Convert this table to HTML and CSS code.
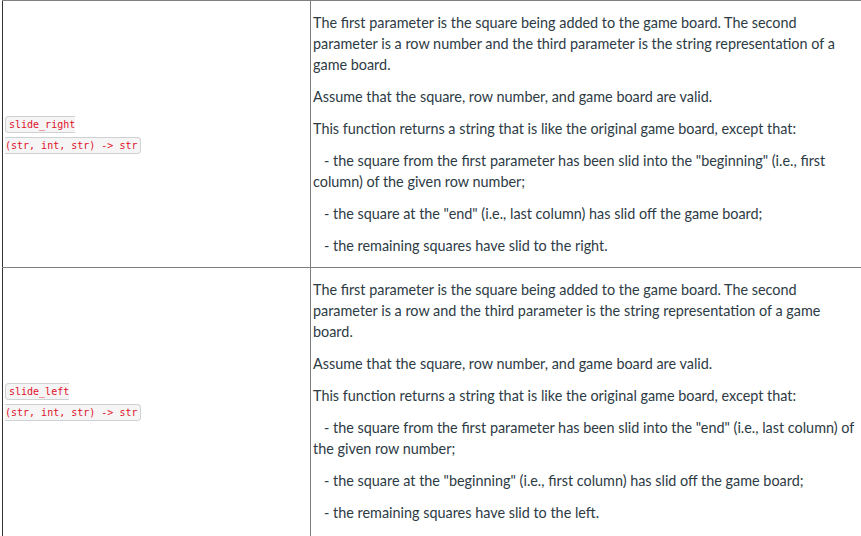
FILE: index.html
```html
<!DOCTYPE html>
<html>
<head>
<meta charset="utf-8">
<link rel="stylesheet" href="styles.css">
</head>
<body>
<div class="wrap">
<table class="api">
  <tr>
    <td class="sig"><code>slide_right<br>(str, int, str) -&gt; str</code></td>
    <td class="desc">
      <p>The first parameter is the square being added to the game board. The second parameter is a row number and the third parameter is the string representation of a game board.</p>
      <p>Assume that the square, row number, and game board are valid.</p>
      <p>This function returns a string that is like the original game board, except that:</p>
      <p>&nbsp; &nbsp;- the square from the first parameter has been slid into the "beginning" (i.e., first column) of the given row number;</p>
      <p>&nbsp; &nbsp;- the square at the "end" (i.e., last column) has slid off the game board;</p>
      <p>&nbsp; &nbsp;- the remaining squares have slid to the right.</p>
    </td>
  </tr>
  <tr>
    <td class="sig"><code>slide_left<br>(str, int, str) -&gt; str</code></td>
    <td class="desc">
      <p>The first parameter is the square being added to the game board. The second parameter is a row and the third parameter is the string representation of a game board.</p>
      <p>Assume that the square, row number, and game board are valid.</p>
      <p>This function returns a string that is like the original game board, except that:</p>
      <p>&nbsp; &nbsp;- the square from the first parameter has been slid into the "end" (i.e., last column) of the given row number;</p>
      <p>&nbsp; &nbsp;- the square at the "beginning" (i.e., first column) has slid off the game board;</p>
      <p>&nbsp; &nbsp;- the remaining squares have slid to the left.</p>
    </td>
  </tr>
</table>
</div>
</body>
</html>
```
FILE: styles.css
```css
html, body {
  margin: 0;
  padding: 0;
  background: #ffffff;
  overflow: hidden;
}
.wrap {
  padding-left: 2px;
  width: 900px;
}
.api {
  border-collapse: collapse;
  table-layout: fixed;
  width: 866px;
  font-family: Lato, "Noto Sans", sans-serif;
  font-size: 14.4px;
  line-height: 21px;
  color: #2d3b45;
}
.api td {
  border: 1px solid #808080;
  padding: 0 2px;
}
.api td.sig {
  width: 303px;
  border-left: 1px solid #333333;
  vertical-align: middle;
}
.api td.desc {
  padding-right: 8px;
  vertical-align: top;
}
.api tr:last-child td {
  padding-bottom: 3px;
}
.api p {
  margin: 11px 0;
}
.sig code {
  font-family: "DejaVu Sans Mono", "Liberation Mono", monospace;
  font-size: 10px;
  line-height: 12px;
  color: #e0112b;
  background: #f5f5f5;
  border: 1px solid #cfd2d5;
  border-radius: 4px;
  padding: 2px 3px;
  vertical-align: 1px;
}
```
